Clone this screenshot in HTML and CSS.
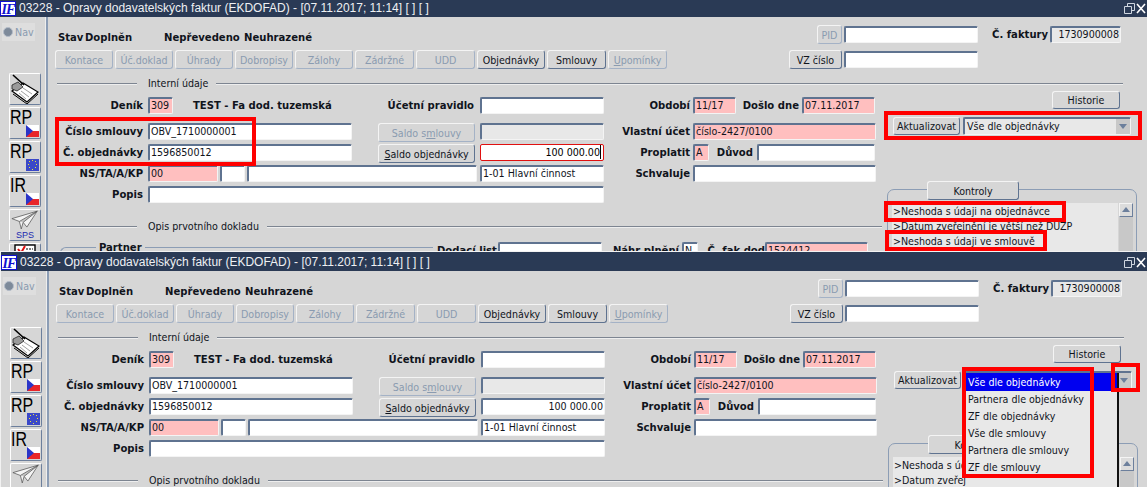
FILE: index.html
```html
<!DOCTYPE html>
<html lang="cs">
<head>
<meta charset="utf-8">
<title>Opravy dodavatelských faktur</title>
<link rel="stylesheet" href="styles.css">
</head>
<body>
<svg class="defs" width="0" height="0" aria-hidden="true">
  <defs>
    <symbol id="cz" viewBox="0 0 13 12"><rect width="13" height="6" fill="#fff"/><rect y="6" width="13" height="6" fill="#e8262a"/><path d="M0 0L7 6L0 12Z" fill="#2a35c8"/></symbol>
    <symbol id="eu" viewBox="0 0 13 12"><rect width="13" height="12" fill="#3a48c8"/><g fill="#e8e040"><rect x="6" y="1" width="1" height="1"/><rect x="9" y="2" width="1" height="1"/><rect x="10" y="5" width="1" height="1"/><rect x="9" y="8" width="1" height="1"/><rect x="6" y="10" width="1" height="1"/><rect x="3" y="8" width="1" height="1"/><rect x="2" y="5" width="1" height="1"/><rect x="3" y="2" width="1" height="1"/></g></symbol>
    <symbol id="book" viewBox="0 0 30 30"><path d="M2 17L13 9L28 18L17 28Z" fill="#fff" stroke="#000" stroke-width="1.2"/><path d="M3 20L17 30L28 20" fill="none" stroke="#000" stroke-width="1"/><path d="M13 14L22 20M11 17L19 23M9 19L16 25" stroke="#888" stroke-width=".8"/><path d="M2 11L8 8L13 13L7 17L2 15Z" fill="#9a9a9a" stroke="#222" stroke-width=".8"/><path d="M3 1L14 11" stroke="#000" stroke-width="1.6"/></symbol>
    <symbol id="plane" viewBox="0 0 32 22"><path d="M2 9L29 1L18 18L14 13L12 20L10 12Z" fill="#f4f4f4" stroke="#555" stroke-width=".8"/><path d="M10 12L29 1L14 13" fill="#c4c4c4" stroke="#555" stroke-width=".8"/></symbol>
    <symbol id="check" viewBox="0 0 30 30"><rect x="5" y="1" width="20" height="28" fill="#fff" stroke="#000" stroke-width="1.4"/><path d="M8 5L11 9L15 2" fill="none" stroke="#e01010" stroke-width="2"/><path d="M16 5H23" stroke="#000" stroke-dasharray="2 1"/></symbol>
  </defs>
</svg>

<section class="win win-one">
  <header class="title">
    <span class="logo">IF</span>
    <span class="title-text">03228 - Opravy dodavatelských faktur (EKDOFAD) - [07.11.2017; 11:14] [ ] [ ]</span>
    <svg class="controls" width="25" height="12" viewBox="0 0 25 12"><path d="M3.5 3.5H10.5V10.5H3.5ZM6.5 3V.5H13.5V7.5H11" fill="none" stroke="#cfd6e0"/><path d="M16 1L24 10M24 1L16 10" stroke="#fff" stroke-width="1.6"/></svg>
  </header>
  <div class="body">
    <aside class="rail">
      <div class="nav"><span class="dot"></span>Nav</div>
      <div class="tool"><svg class="tool-svg" width="30" height="30"><use href="#book"/></svg></div>
      <div class="tool"><span class="tool-text">RP</span><svg class="flag" width="13" height="12"><use href="#cz"/></svg></div>
      <div class="tool"><span class="tool-text">RP</span><svg class="flag" width="13" height="12"><use href="#eu"/></svg></div>
      <div class="tool"><span class="tool-text">IR</span><svg class="flag" width="13" height="12"><use href="#cz"/></svg></div>
      <div class="tool tool-sps"><svg width="30" height="21"><use href="#plane"/></svg><span class="sps">SPS</span></div>
      <div class="tool"><svg class="tool-svg" width="30" height="30"><use href="#check"/></svg></div>
    </aside>
    <main class="main">
      <div class="row-top">
        <b class="st st-a">Stav</b><b class="st st-b">Doplněn</b><b class="st st-c">Nepřevedeno</b><b class="st st-d">Neuhrazené</b>
        <button class="btn off b-pid">PID</button><div class="f w134 ml2"></div>
        <b class="lbl-fak">Č. faktury</b><div class="f grey right w71">1730900008</div>
      </div>
      <div class="row-btns">
        <button class="btn off b58">Kontace</button><button class="btn off b58">Úč.doklad</button><button class="btn off b58">Úhrady</button><button class="btn off b58">Dobropisy</button><button class="btn off b58">Zálohy</button><button class="btn off b59">Zádržné</button><button class="btn off b59">UDD</button><button class="btn b68">Objednávky</button><button class="btn b59">Smlouvy</button><button class="btn off b59"><u>U</u>pomínky</button>
        <button class="btn b-vz">VZ číslo</button><div class="f w134 ml2 f-vz"></div>
      </div>
      <div class="sep sep-wide"><span class="sep-text">Interní údaje</span></div>
      <div class="lower">
        <div class="left">
          <div class="row r-first">
            <div class="c1"><b class="lbl">Deník</b><div class="f pink w25">309</div><b class="heading">TEST - Fa dod. tuzemská</b></div>
            <div class="c2"><b class="lbl-over">Účetní pravidlo</b><div class="f w124"></div></div>
            <div class="c3"><b class="lbl3">Období</b><div class="f pink w43">11/17</div><b class="lbl-dd">Došlo dne</b><div class="f pink w73">07.11.2017</div></div>
          </div>
          <div class="row r-second">
            <div class="c1"><b class="lbl">Číslo smlouvy</b><div class="f w204">OBV_1710000001</div><button class="btn off b-saldo">Saldo s<u>m</u>louvy</button></div>
            <div class="c2"><div class="f grey w124"></div></div>
            <div class="c3"><b class="lbl3">Vlastní účet</b><div class="f pink w183">číslo-2427/0100</div></div>
          </div>
          <div class="row">
            <div class="c1"><b class="lbl">Č. objednávky</b><div class="f w204">1596850012</div><button class="btn b-saldo"><u>S</u>aldo objednávky</button></div>
            <div class="c2"><div class="f right w124 focus">100 000.00</div></div>
            <div class="c3"><b class="lbl3">Proplatit</b><div class="f pink w16">A</div><b class="lbl-duvod">Důvod</b><div class="f w118"></div></div>
          </div>
          <div class="row">
            <div class="c1"><b class="lbl">NS/TA/A/KP</b><div class="f pink w70">00</div><div class="f w25 ml2"></div><div class="f w230 ml2"></div></div>
            <div class="c2"><div class="f w124">1-01 Hlavní činnost</div></div>
            <div class="c3"><b class="lbl3">Schvaluje</b><div class="f w183"></div></div>
          </div>
          <div class="row">
            <div class="c1 c-span"><b class="lbl">Popis</b><div class="f w456"></div></div>
          </div>
          <div class="sep sep-left"><span class="sep-text sep-text-2">Opis prvotního dokladu</span></div>
          <div class="row r-partner">
            <div class="partner"><b class="partner-text">Partner</b></div>
            <b class="lbl-dodaci">Dodací list</b><div class="f w104"></div>
            <b class="lbl-nahr">Náhr plnění</b><div class="f w16">N</div>
            <b class="lbl-cfak">Č. fak dod</b><div class="f pink w103">1524412</div>
          </div>
        </div>
        <div class="right-col">
          <button class="btn b-hist">Historie</button>
          <div class="row-akt"><button class="btn b-akt">Aktualizovat</button><div class="combo"><span class="combo-text">Vše dle objednávky</span><span class="combo-arrow"></span></div></div>
          <div class="group">
            <button class="btn b-kontroly">Kontroly</button>
            <div class="listwrap">
              <div class="list"><p>&gt;Neshoda s údaji na objednávce</p><p>&gt;Datum zveřejnění je větší než DÚZP</p><p>&gt;Neshoda s údaji ve smlouvě</p></div>
              <div class="scroll"><span class="scroll-up"></span></div>
            </div>
          </div>
        </div>
      </div>
    </main>
  </div>
  <div class="mark m-smlouvy"></div>
  <div class="mark m-akt"></div>
  <div class="mark m-nes1"></div>
  <div class="mark m-nes2"></div>
</section>

<section class="win win-two">
  <header class="title">
    <span class="logo">IF</span>
    <span class="title-text">03228 - Opravy dodavatelských faktur (EKDOFAD) - [07.11.2017; 11:14] [ ] [ ]</span>
    <svg class="controls" width="25" height="12" viewBox="0 0 25 12"><path d="M3.5 3.5H10.5V10.5H3.5ZM6.5 3V.5H13.5V7.5H11" fill="none" stroke="#cfd6e0"/><path d="M16 1L24 10M24 1L16 10" stroke="#fff" stroke-width="1.6"/></svg>
  </header>
  <div class="body">
    <aside class="rail">
      <div class="nav"><span class="dot"></span>Nav</div>
      <div class="tool"><svg class="tool-svg" width="30" height="30"><use href="#book"/></svg></div>
      <div class="tool"><span class="tool-text">RP</span><svg class="flag" width="13" height="12"><use href="#cz"/></svg></div>
      <div class="tool"><span class="tool-text">RP</span><svg class="flag" width="13" height="12"><use href="#eu"/></svg></div>
      <div class="tool"><span class="tool-text">IR</span><svg class="flag" width="13" height="12"><use href="#cz"/></svg></div>
      <div class="tool tool-sps"><svg width="30" height="21"><use href="#plane"/></svg></div>
    </aside>
    <main class="main">
      <div class="row-top">
        <b class="st st-a">Stav</b><b class="st st-b">Doplněn</b><b class="st st-c">Nepřevedeno</b><b class="st st-d">Neuhrazené</b>
        <button class="btn off b-pid">PID</button><div class="f w134 ml2"></div>
        <b class="lbl-fak">Č. faktury</b><div class="f grey right w71">1730900008</div>
      </div>
      <div class="row-btns">
        <button class="btn off b58">Kontace</button><button class="btn off b58">Úč.doklad</button><button class="btn off b58">Úhrady</button><button class="btn off b58">Dobropisy</button><button class="btn off b58">Zálohy</button><button class="btn off b59">Zádržné</button><button class="btn off b59">UDD</button><button class="btn b68">Objednávky</button><button class="btn b59">Smlouvy</button><button class="btn off b59"><u>U</u>pomínky</button>
        <button class="btn b-vz">VZ číslo</button><div class="f w134 ml2 f-vz"></div>
      </div>
      <div class="sep sep-wide"><span class="sep-text">Interní údaje</span></div>
      <div class="lower">
        <div class="left">
          <div class="row r-first">
            <div class="c1"><b class="lbl">Deník</b><div class="f pink w25">309</div><b class="heading">TEST - Fa dod. tuzemská</b></div>
            <div class="c2"><b class="lbl-over">Účetní pravidlo</b><div class="f w124"></div></div>
            <div class="c3"><b class="lbl3">Období</b><div class="f pink w43">11/17</div><b class="lbl-dd">Došlo dne</b><div class="f pink w73">07.11.2017</div></div>
          </div>
          <div class="row r-second">
            <div class="c1"><b class="lbl">Číslo smlouvy</b><div class="f w204">OBV_1710000001</div><button class="btn off b-saldo">Saldo s<u>m</u>louvy</button></div>
            <div class="c2"><div class="f grey w124"></div></div>
            <div class="c3"><b class="lbl3">Vlastní účet</b><div class="f pink w183">číslo-2427/0100</div></div>
          </div>
          <div class="row">
            <div class="c1"><b class="lbl">Č. objednávky</b><div class="f w204">1596850012</div><button class="btn b-saldo"><u>S</u>aldo objednávky</button></div>
            <div class="c2"><div class="f right w124">100 000.00</div></div>
            <div class="c3"><b class="lbl3">Proplatit</b><div class="f pink w16">A</div><b class="lbl-duvod">Důvod</b><div class="f w118"></div></div>
          </div>
          <div class="row">
            <div class="c1"><b class="lbl">NS/TA/A/KP</b><div class="f pink w70">00</div><div class="f w25 ml2"></div><div class="f w230 ml2"></div></div>
            <div class="c2"><div class="f w124">1-01 Hlavní činnost</div></div>
            <div class="c3"><b class="lbl3">Schvaluje</b><div class="f w183"></div></div>
          </div>
          <div class="row">
            <div class="c1 c-span"><b class="lbl">Popis</b><div class="f w456"></div></div>
          </div>
          <div class="sep sep-left"><span class="sep-text sep-text-2">Opis prvotního dokladu</span></div>
        </div>
        <div class="right-col">
          <button class="btn b-hist">Historie</button>
          <div class="row-akt"><button class="btn b-akt">Aktualizovat</button><div class="combo"><span class="combo-arrow"></span>
            <ul class="popup"><li class="sel">Vše dle objednávky</li><li>Partnera dle objednávky</li><li>ZF dle objednávky</li><li>Vše dle smlouvy</li><li>Partnera dle smlouvy</li><li>ZF dle smlouvy</li></ul>
          </div></div>
          <div class="group">
            <button class="btn b-kontroly">Kontroly</button>
            <div class="listwrap">
              <div class="list"><p>&gt;Neshoda s údaji na objednávce</p><p>&gt;Datum zveřejnění je větší než DÚZP</p></div>
              <div class="scroll"><span class="scroll-up"></span></div>
            </div>
          </div>
        </div>
      </div>
    </main>
  </div>
  <div class="mark m-popup"></div>
  <div class="mark m-arrow"></div>
</section>
</body>
</html>
```

FILE: styles.css
```css
* { box-sizing: border-box; }
html, body { margin: 0; padding: 0; height: 100%; overflow: hidden; background: #f2f2f2; }
body { font: 10.6px/17px "DejaVu Sans Condensed", "DejaVu Sans", sans-serif; color: #10141c; }
.defs { position: absolute; }
b { font-weight: 700; white-space: nowrap; font-size: 11.2px; }
p { margin: 0; }

.win { position: relative; overflow: hidden; background: #d6d6d6; display: flex; flex-direction: column; }
.win-one { margin-top: -2px; height: 253px; margin-bottom: 1px; }
.win-two { margin-left: 1px; height: 235px; }

.title { height: 19px; flex: none; background: #2a3a55; color: #eef0f3; display: flex; align-items: center; position: relative; font: 12px/17px "Liberation Sans", sans-serif; white-space: nowrap; }
.logo { width: 16px; height: 15px; margin-top: 2px; background: #fff; color: #1010d0; font: italic 700 14px/15px "Liberation Serif", serif; text-align: center; flex: none; border: 1px solid #1010d0; letter-spacing: -1px; }
.title-text { margin-left: 3px; margin-top: 1px; }
.controls { margin-left: auto; margin-right: 1px; margin-top: 2px; }

.body { display: flex; flex: 1; min-height: 0; }
.rail { width: 48px; flex: none; border-right: 2px solid #8c9db5; box-shadow: inset -1px 0 #eee; padding: 6px 0 0 0; }
.nav { width: 33px; height: 18px; margin-left: 2px; background: #dedede; color: #8a9bb0; display: flex; align-items: center; gap: 2px; padding-left: 1px; }
.dot { width: 10px; height: 10px; border-radius: 50%; background: #7d8a9a; border: 1px solid #b4bcc8; }
.tool { width: 32px; height: 32px; margin: 0 0 2px 9px; background: #d6d6d6; border: 1px solid #fff; border-right-color: #6c7f9c; border-bottom-color: #6c7f9c; border-radius: 2px; display: flex; flex-direction: column; position: relative; }
.nav + .tool { margin-top: 32px; }
.tool-text { font: 20px/20px "Liberation Sans", sans-serif; color: #000; transform: scaleX(.8); transform-origin: 0 0; margin-top: -1px; }
.flag { position: absolute; right: 1px; bottom: 1px; }
.tool-svg { display: block; }
.tool-sps { align-items: center; }
.sps { color: #1c2ab0; font: 9px/9px "Liberation Sans", sans-serif; }

.main { width: 1098px; flex: none; padding-top: 8px; }
.row-top { display: flex; height: 19px; align-items: center; }
.st { padding-top: 6px; }
.st-a { margin-left: 10px; width: 27px; }
.st-b { width: 79px; }
.st-c { width: 80px; }
.st-d { width: 573px; }

.btn { font: inherit; color: #10141c; background: #d6d6d6; border: 1px solid #f4f4f4; border-right-color: #5f7390; border-bottom-color: #5f7390; border-radius: 3px; padding: 0; height: 19px; line-height: 16px; white-space: nowrap; flex: none; }
.btn.off { color: #8a9bb0; border-right-color: #a4b2c6; border-bottom-color: #a4b2c6; }
.b-pid { width: 25px; }
.b58 { width: 58px; margin-right: 2px; }
.b59 { width: 59px; margin-right: 2px; }
.b68 { width: 68px; margin-right: 2px; }
.b-vz { width: 53px; margin-left: 120px; }
.f-vz { margin-top: 1px; }

.f { height: 17px; flex: none; background: #fff; border: 2px solid #5f7390; border-right: 1px solid #f4f4f4; border-bottom: 1px solid #f4f4f4; border-radius: 2px; padding: 0 1px; line-height: 13px; white-space: nowrap; overflow: hidden; }
.pink { background: #ffbfbf; }
.grey { background: #e8e8e8; }
.right { text-align: right; }
.focus { border: 1px solid #e01010; color: #000; padding: 0 2px 0 1px; line-height: 15px; }
.focus::after { content: ""; display: inline-block; width: 1px; height: 14px; background: #000; vertical-align: top; }
.ml2 { margin-left: 2px; }
.w16 { width: 16px; } .w25 { width: 25px; } .w43 { width: 43px; } .w70 { width: 70px; } .w71 { width: 71px; } .w73 { width: 73px; }
.w103 { width: 103px; } .w104 { width: 104px; } .w118 { width: 118px; } .w124 { width: 124px; } .w134 { width: 134px; } .w183 { width: 183px; } .w204 { width: 204px; } .w230 { width: 230px; } .w456 { width: 456px; }

.lbl-fak { margin-left: 14px; width: 58px; }
.row-btns { display: flex; margin-top: 6px; padding-left: 7px; height: 19px; }

.sep { height: 14px; margin-top: 7px; display: flex; align-items: center; }
.sep::before { content: ""; width: 80px; height: 0; border-top: 1px solid #7d8591; box-shadow: 0 1px #eee; margin-left: 9px; }
.sep::after { content: ""; flex: 1; height: 0; border-top: 1px solid #7d8591; box-shadow: 0 1px #eee; }
.sep-wide { width: 1075px; }
.sep-text { margin: 0 8px 0 11px; white-space: nowrap; }
.sep-left { width: 834px; margin-top: 16px; }

.lower { display: flex; }
.left { width: 836px; flex: none; padding-top: 7px; }
.row { display: flex; height: 17px; margin-bottom: 4px; }
.r-first { margin-bottom: 9px; }
.c1 { width: 432px; flex: none; display: flex; }
.c2 { width: 124px; flex: none; position: relative; }
.c3 { width: 272px; flex: none; display: flex; }
.c-span { width: auto; }
.lbl { width: 95px; margin-right: 5px; text-align: right; }
.lbl3 { width: 86px; margin-right: 3px; text-align: right; }
.lbl-over { position: absolute; right: 130px; top: 0; }
.heading { margin-left: 20px; }
.lbl-dd { width: 63px; margin-right: 3px; text-align: right; }
.lbl-duvod { width: 44px; text-align: right; margin-right: 4px; }
.b-saldo { width: 97px; margin-left: 26px; }

.r-partner { margin-top: 9px; }
.partner { width: 373px; margin-left: 12px; height: 17px; border-top: 1px solid #8c9db5; border-left: 1px solid #8c9db5; border-radius: 6px 0 0 0; margin-top: 5px; flex: none; padding-left: 35px; }
.partner-text { position: relative; top: -9px; background: #d6d6d6; padding: 0 3px; }
.lbl-dodaci { margin-left: 4px; width: 58px; text-align: right; margin-right: 3px; }
.lbl-nahr { width: 77px; text-align: right; margin-right: 3px; }
.lbl-cfak { width: 67px; text-align: right; margin-right: 0; }

.right-col { width: 263px; flex: none; padding-top: 1px; }
.b-hist { display: block; width: 68px; height: 18px; margin-left: 168px; }
.row-akt { display: flex; margin: 8px 0 0 9px; height: 18px; }
.b-akt { width: 67px; height: 18px; }
.combo { width: 168px; height: 18px; margin-left: 3px; background: #e8e8e8; border: 2px solid #5f7390; border-right: 1px solid #f4f4f4; border-bottom: 1px solid #f4f4f4; border-radius: 2px; position: relative; padding-left: 2px; line-height: 15px; }
.combo-arrow { position: absolute; right: 0; top: 0; width: 14px; height: 15px; background: #c8c8c8; }
.combo-arrow::after { content: ""; position: absolute; left: 3px; top: 5px; border: 4px solid transparent; border-top: 5px solid #6c7f9c; border-bottom: 0; }

.popup { position: absolute; left: 0; top: 0; width: 153px; height: 116px; margin: 0; padding: 0; list-style: none; background: #e8e8e8; border-right: 2px solid #101010; z-index: 1; }
.popup li { height: 17px; line-height: 17px; padding-left: 2px; }
.popup .sel { background: #0000f0; color: #fff; height: 18px; line-height: 19px; }

.group { margin: 54px 0 0 3px; width: 250px; height: 120px; border: 1px solid #8c9db5; border-radius: 7px 7px 0 0; }
.b-kontroly { display: block; width: 92px; height: 19px; margin: -9px 0 0 39px; }
.listwrap { display: flex; margin: 3px 0 0 4px; }
.list { width: 226px; height: 100px; background: #e8e8e8; padding: 1px 0 0 1px; }
.list p { height: 15px; line-height: 15px; white-space: nowrap; }
.scroll { width: 14px; height: 100px; margin-left: 1px; background: #c8c8c8; }
.scroll-up { display: block; height: 14px; background: #dcdcdc; border: 1px solid #f4f4f4; border-right-color: #6c7f9c; border-bottom-color: #6c7f9c; position: relative; }
.scroll-up::after { content: ""; position: absolute; left: 2px; top: 3px; border: 4px solid transparent; border-bottom: 5px solid #6c7f9c; border-top: 0; }

.mark { position: absolute; border: 4px solid #f00; z-index: 2; }
.m-smlouvy { left: 55px; top: 119px; width: 201px; height: 49px; }
.m-akt { left: 884px; top: 113px; width: 258px; height: 29px; }
.m-nes1 { left: 884px; top: 203px; width: 182px; height: 21px; }
.m-nes2 { left: 885px; top: 232px; width: 162px; height: 21px; }
.m-popup { left: 961px; top: 115px; width: 132px; height: 111px; }
.m-arrow { left: 1110px; top: 111px; width: 29px; height: 29px; }
```
